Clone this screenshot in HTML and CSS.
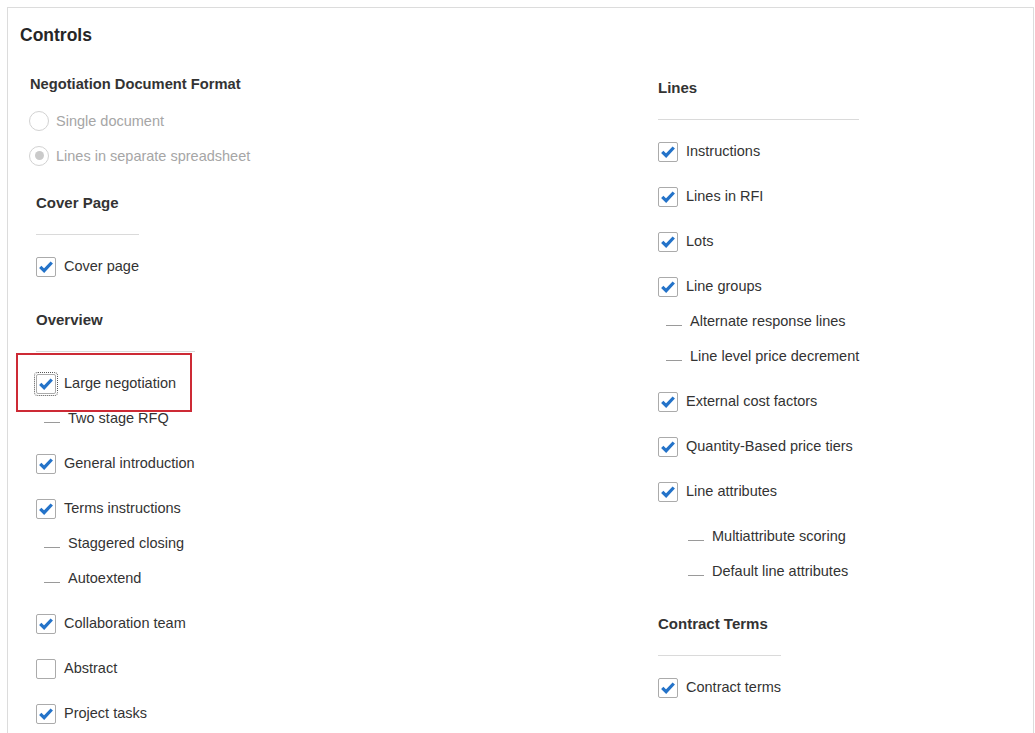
FILE: index.html
```html
<!DOCTYPE html>
<html>
<head>
<meta charset="utf-8">
<link rel="stylesheet" href="styles.css">
</head>
<body>
<div class="panel">
  <div class="title">Controls</div>
  <div class="columns">
    <div class="col col-left">
      <div class="format">
        <div class="fhead">Negotiation Document Format</div>
        <div class="rrow"><span class="radio"></span><span class="rlabel">Single document</span></div>
        <div class="rrow"><span class="radio on"></span><span class="rlabel">Lines in separate spreadsheet</span></div>
      </div>

      <div class="section sec-cover">
        <div class="shead">Cover Page</div>
        <div class="row cb"><span class="box checked"><svg viewBox="0 0 20 20"><path d="M3.6 9.8 L7.9 14 L16.4 5"/></svg></span><span class="label">Cover page</span></div>
      </div>

      <div class="section sec-overview">
        <div class="shead">Overview</div>
        <div class="row cb highlight"><span class="box checked focus"><svg viewBox="0 0 20 20"><path d="M3.6 9.8 L7.9 14 L16.4 5"/></svg></span><span class="label">Large negotiation</span><span class="redbox"></span></div>
        <div class="row sub"><span class="dash"></span><span class="label">Two stage RFQ</span></div>
        <div class="row cb"><span class="box checked"><svg viewBox="0 0 20 20"><path d="M3.6 9.8 L7.9 14 L16.4 5"/></svg></span><span class="label">General introduction</span></div>
        <div class="row cb"><span class="box checked"><svg viewBox="0 0 20 20"><path d="M3.6 9.8 L7.9 14 L16.4 5"/></svg></span><span class="label">Terms instructions</span></div>
        <div class="row sub"><span class="dash"></span><span class="label">Staggered closing</span></div>
        <div class="row sub"><span class="dash"></span><span class="label">Autoextend</span></div>
        <div class="row cb"><span class="box checked"><svg viewBox="0 0 20 20"><path d="M3.6 9.8 L7.9 14 L16.4 5"/></svg></span><span class="label">Collaboration team</span></div>
        <div class="row cb"><span class="box"></span><span class="label">Abstract</span></div>
        <div class="row cb"><span class="box checked"><svg viewBox="0 0 20 20"><path d="M3.6 9.8 L7.9 14 L16.4 5"/></svg></span><span class="label">Project tasks</span></div>
      </div>
    </div>

    <div class="col col-right">
      <div class="section sec-lines">
        <div class="shead">Lines</div>
        <div class="row cb"><span class="box checked"><svg viewBox="0 0 20 20"><path d="M3.6 9.8 L7.9 14 L16.4 5"/></svg></span><span class="label">Instructions</span></div>
        <div class="row cb"><span class="box checked"><svg viewBox="0 0 20 20"><path d="M3.6 9.8 L7.9 14 L16.4 5"/></svg></span><span class="label">Lines in RFI</span></div>
        <div class="row cb"><span class="box checked"><svg viewBox="0 0 20 20"><path d="M3.6 9.8 L7.9 14 L16.4 5"/></svg></span><span class="label">Lots</span></div>
        <div class="row cb"><span class="box checked"><svg viewBox="0 0 20 20"><path d="M3.6 9.8 L7.9 14 L16.4 5"/></svg></span><span class="label">Line groups</span></div>
        <div class="row sub"><span class="dash"></span><span class="label">Alternate response lines</span></div>
        <div class="row sub"><span class="dash"></span><span class="label">Line level price decrement</span></div>
        <div class="row cb"><span class="box checked"><svg viewBox="0 0 20 20"><path d="M3.6 9.8 L7.9 14 L16.4 5"/></svg></span><span class="label">External cost factors</span></div>
        <div class="row cb"><span class="box checked"><svg viewBox="0 0 20 20"><path d="M3.6 9.8 L7.9 14 L16.4 5"/></svg></span><span class="label">Quantity-Based price tiers</span></div>
        <div class="row cb"><span class="box checked"><svg viewBox="0 0 20 20"><path d="M3.6 9.8 L7.9 14 L16.4 5"/></svg></span><span class="label">Line attributes</span></div>
        <div class="nested">
          <div class="row"><span class="dash"></span><span class="label">Multiattribute scoring</span></div>
          <div class="row"><span class="dash"></span><span class="label">Default line attributes</span></div>
        </div>
      </div>

      <div class="section sec-contract">
        <div class="shead">Contract Terms</div>
        <div class="row cb"><span class="box checked"><svg viewBox="0 0 20 20"><path d="M3.6 9.8 L7.9 14 L16.4 5"/></svg></span><span class="label">Contract terms</span></div>
      </div>
    </div>
  </div>
</div>
</body>
</html>
```

FILE: styles.css
```css
html, body {
  margin: 0;
  padding: 0;
  overflow: hidden;
  background: #ffffff;
}

body {
  font-family: "Liberation Sans", Arial, sans-serif;
  color: #333333;
}

.panel {
  margin: 7px 1px 0 7px;
  border: 1px solid #dcdcdc;
  border-bottom: none;
  padding: 15px 12px 40px 12px;
  min-height: 760px;
}

.title {
  font-size: 17.5px;
  font-weight: bold;
  line-height: 24px;
  color: #262626;
}

.columns {
  display: grid;
  grid-template-columns: 638px 1fr;
}

/* Negotiation Document Format */
.format {
  margin-left: 10px;
  margin-top: 26px;
}

.fhead {
  font-size: 14.7px;
  font-weight: bold;
  line-height: 20px;
  margin-bottom: 10px;
  color: #333333;
  position: relative;
  top: 1px;
}

.rrow {
  display: flex;
  align-items: center;
  height: 35px;
  margin-left: -1px;
}

.radio {
  width: 20px;
  height: 20px;
  box-sizing: border-box;
  border: 1px solid #d2d2d2;
  border-radius: 50%;
  margin-right: 7px;
  display: flex;
  align-items: center;
  justify-content: center;
  background: #fff;
}

.radio.on::after {
  content: "";
  width: 9px;
  height: 9px;
  border-radius: 50%;
  background: #cacaca;
}

.rlabel {
  font-size: 14.5px;
  color: #a6a6a6;
}

/* sections */
.section {
  width: fit-content;
}

.col-left .section {
  margin-left: 16px;
}

.sec-cover {
  margin-top: 20px;
}

.sec-overview {
  margin-top: 26px;
}

.sec-lines {
  margin-top: 31px;
}

.sec-contract {
  margin-top: 25px;
}

.shead {
  font-size: 15px;
  font-weight: bold;
  line-height: 20px;
  padding-bottom: 21px;
  border-bottom: 1px solid #dadada;
  margin-bottom: 4px;
  color: #333333;
}

.row {
  display: flex;
  align-items: center;
  height: 35px;
  position: relative;
  box-sizing: border-box;
}

.row.cb {
  height: 45px;
  padding-top: 10px;
}

.row.sub {
  padding-left: 8px;
}

.nested {
  padding-top: 10px;
  padding-left: 30px;
}

.label {
  font-size: 14.5px;
  color: #333333;
  white-space: nowrap;
  position: relative;
  top: -1px;
}

.box {
  width: 20px;
  height: 20px;
  box-sizing: border-box;
  border: 1px solid #ababab;
  border-radius: 2px;
  background: #ffffff;
  margin-right: 8px;
  flex: none;
  position: relative;
}

.box svg {
  display: block;
  width: 18px;
  height: 18px;
}

.box svg path {
  fill: none;
  stroke: #2473c9;
  stroke-width: 3.6;
  stroke-linecap: butt;
  stroke-linejoin: miter;
}

.box.focus {
  outline: 1px dotted #555555;
  outline-offset: 1px;
}

.dash {
  width: 16px;
  height: 1px;
  background: #9a9a9a;
  margin-right: 8px;
  flex: none;
  position: relative;
  top: 4px;
}

.redbox {
  position: absolute;
  left: -20px;
  top: -3px;
  width: 176px;
  height: 59px;
  box-sizing: border-box;
  border: 2px solid #cd2a35;
  pointer-events: none;
}
```
